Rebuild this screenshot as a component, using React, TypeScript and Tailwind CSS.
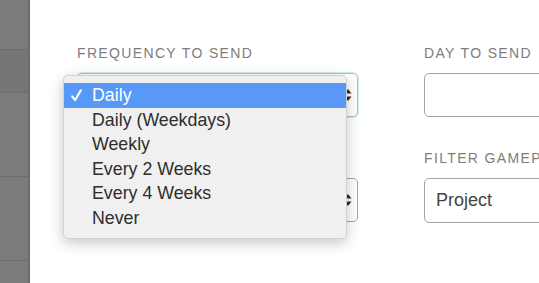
import React from "react";

const options = ["Daily", "Daily (Weekdays)", "Weekly", "Every 2 Weeks", "Every 4 Weeks", "Never"];

const Arrows = () => (
  <svg width="8" height="14" viewBox="0 0 8 14" className="text-[#2b2b2b]">
    <path d="M4 1 L7.5 5.5 H0.5 Z" fill="currentColor" />
    <path d="M4 13 L7.5 8.5 H0.5 Z" fill="currentColor" />
  </svg>
);

const Check = () => (
  <svg width="11" height="13" viewBox="0 0 11 13">
    <path d="M1.2 7.4 L4 11.2 L9.8 1.4" fill="none" stroke="white" strokeWidth="2.1" strokeLinecap="round" strokeLinejoin="round" />
  </svg>
);

const Label = ({ children }: { children?: React.ReactNode }) => (
  <div className="h-5 text-[14px] leading-5 tracking-[1.35px] text-[#7d7d7d] whitespace-nowrap">{children}</div>
);

const App = () => {
  return (
    <div
      className="flex h-[283px] w-[539px] overflow-hidden bg-white"
      style={{ fontFamily: '"Liberation Sans", Arial, sans-serif' }}
    >
      {/* sidebar behind the modal */}
      <div className="flex w-[30px] shrink-0 flex-col border-r-2 border-[#6c6c6c] bg-[#7b7b7b]">
        <div className="h-[50px] border-b border-[#6d6d6d]" />
        <div className="h-[43px] border-b border-[#6d6d6d] bg-[#767676]" />
        <div className="h-[84px] border-b border-[#6d6d6d]" />
        <div className="h-[84px] border-b border-[#6d6d6d]" />
        <div className="flex-1" />
      </div>

      <div className="relative flex-1 pl-[47px] pt-[43px]">
        <div className="flex gap-[66px]">
          <div className="w-[281px] shrink-0">
            <Label>FREQUENCY TO SEND</Label>
            <div className="mt-[10px] flex h-[44px] items-center justify-end rounded-[5px] border border-[#9fc6cc] pr-[5px] shadow-[0_0_0_1px_#d6e9ec]">
              <Arrows />
            </div>
            {/* second label sits under the open menu */}
            <div className="mt-[31px]">
              <Label />
            </div>
            <div className="mt-[10px] flex h-[44px] items-center justify-end rounded-[5px] border border-[#a5a5a5] pr-[5px]">
              <Arrows />
            </div>
          </div>

          <div className="w-[300px] shrink-0">
            <Label>DAY TO SEND</Label>
            <div className="mt-[10px] h-[44px] rounded-[5px] border border-[#a5a5a5]" />
            <div className="mt-[31px]">
              <Label>FILTER GAMEP</Label>
            </div>
            <div className="mt-[10px] flex h-[45px] items-center rounded-[5px] border border-[#a5a5a5] pl-[11px] text-[18px] text-[#444]">
              Project
            </div>
          </div>
        </div>

        {/* open popup menu */}
        <div className="absolute left-[33px] top-[75px] w-[284px] rounded-[5px] border border-[#d2d2d2] bg-[#f0f0f0] pt-[7px] pb-[7px] shadow-[0_4px_14px_rgba(0,0,0,0.22)]">
          {options.map((o, i) => (
            <div
              key={o}
              className={
                i === 0
                  ? "flex h-[24.6px] items-center bg-[#5899f7] text-[17.8px] text-white"
                  : "flex h-[24.6px] items-center text-[17.8px] text-[#2e2e2e]"
              }
            >
              <span className="flex w-[28px] pl-[7px]">{i === 0 ? <Check /> : null}</span>
              <span>{o}</span>
            </div>
          ))}
        </div>
      </div>
    </div>
  );
};

export default App;
